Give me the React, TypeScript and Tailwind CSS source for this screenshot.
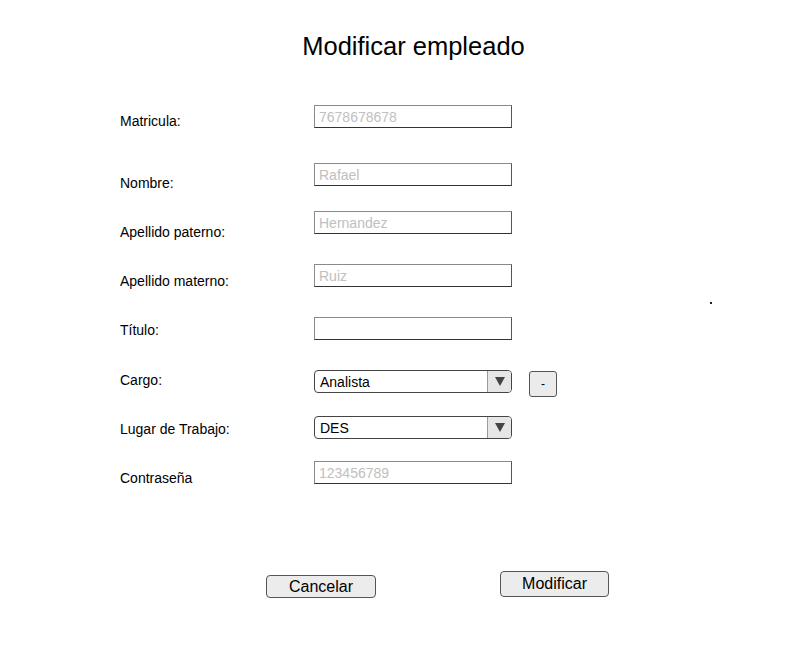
import React from "react";

const font = { fontFamily: '"Liberation Sans", Arial, sans-serif' };

function TextBox({ value, placeholder }: { value?: string; placeholder?: string }) {
  return (
    <div className="w-[198px] h-[23px] border border-[#8a8a8a] border-r-[#555] border-b-[#333] bg-white flex items-center pl-[4px] text-[14px] leading-[16px]">
      {value ? (
        <span className="text-black">{value}</span>
      ) : (
        <span className="text-[#c0c0c0]">{placeholder}</span>
      )}
    </div>
  );
}

function Select({ value }: { value: string }) {
  return (
    <div className="w-[198px] h-[23px] border border-[#444] rounded-[4px] bg-white flex items-stretch overflow-hidden">
      <div className="flex-1 flex items-center pl-[5px] text-[14px] leading-[16px] text-black">{value}</div>
      <div className="w-[24px] bg-[#e6e6e6] border-l border-[#9a9a9a] flex items-center justify-center">
        <svg width="10" height="9" viewBox="0 0 10 9">
          <polygon points="0,0 10,0 5,9" fill="#444" />
        </svg>
      </div>
    </div>
  );
}

function Row({
  label,
  offset,
  mt,
  children,
}: {
  label: string;
  offset: string;
  mt: string;
  children: React.ReactNode;
}) {
  return (
    <div className={`flex items-start h-[23px] pl-[120px] ${mt}`}>
      <div className={`w-[194px] text-[14px] leading-[16px] text-black ${offset}`}>{label}</div>
      {children}
    </div>
  );
}

export default function App() {
  return (
    <div className="relative w-[801px] h-[645px] bg-white overflow-hidden" style={font}>
      <div className="pt-[31px] pl-[26px] text-center text-[25.5px] leading-[30px] text-black">
        Modificar empleado
      </div>

      <div className="flex flex-col">
        <Row label="Matricula:" offset="mt-[8px]" mt="mt-[44px]">
          <TextBox placeholder="7678678678" />
        </Row>
        <Row label="Nombre:" offset="mt-[12px]" mt="mt-[35px]">
          <TextBox placeholder="Rafael" />
        </Row>
        <Row label="Apellido paterno:" offset="mt-[13px]" mt="mt-[25px]">
          <TextBox placeholder="Hernandez" />
        </Row>
        <Row label="Apellido materno:" offset="mt-[9px]" mt="mt-[30px]">
          <TextBox placeholder="Ruiz" />
        </Row>
        <Row label="Título:" offset="mt-[5px]" mt="mt-[30px]">
          <TextBox />
        </Row>
        <Row label="Cargo:" offset="mt-[2px]" mt="mt-[30px]">
          <Select value="Analista" />
          <button className="ml-[17px] mt-[1px] w-[28px] h-[26px] bg-[#ebebeb] border border-[#555] rounded-[3px] flex items-center justify-center text-[12px] leading-[12px] text-black">
            -
          </button>
        </Row>
        <Row label="Lugar de Trabajo:" offset="mt-[5px]" mt="mt-[23px]">
          <Select value="DES" />
        </Row>
        <Row label="Contraseña" offset="mt-[9px]" mt="mt-[22px]">
          <TextBox placeholder="123456789" />
        </Row>

        <div className="flex items-start pl-[266px] mt-[87px]">
          <button className="mt-[4px] w-[110px] h-[23px] bg-[#ececec] border border-[#555] rounded-[4px] text-[16px] leading-[18px] text-black flex items-center justify-center">
            Cancelar
          </button>
          <button className="ml-[124px] w-[109px] h-[26px] bg-[#ececec] border border-[#555] rounded-[4px] text-[16px] leading-[18px] text-black flex items-center justify-center">
            Modificar
          </button>
        </div>
      </div>

      <div className="absolute left-[710px] top-[302px] w-[2px] h-[2px] bg-[#222]" />
    </div>
  );
}
